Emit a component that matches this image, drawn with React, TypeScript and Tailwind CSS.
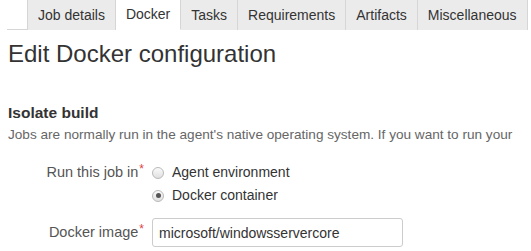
import { useState } from 'react'

const TABS = ['Job details', 'Docker', 'Tasks', 'Requirements', 'Artifacts', 'Miscellaneous']

function Radio({ checked, label, onSelect }: { checked: boolean; label: string; onSelect: () => void }) {
  return (
    <label className="flex h-[23px] cursor-pointer items-center gap-[8px]" onClick={onSelect}>
      <span className="flex h-[12px] w-[12px] items-center justify-center rounded-full border border-[#b9b9b9] bg-gradient-to-b from-[#fafafa] to-[#e0e0e0]">
        {checked && <span className="h-[5px] w-[5px] rounded-full bg-[#555]" />}
      </span>
      <span className="text-[14px] text-[#333]">{label}</span>
    </label>
  )
}

export default function App() {
  const [active, setActive] = useState('Docker')
  const [mode, setMode] = useState<'agent' | 'docker'>('docker')

  return (
    <div className="h-[251px] w-[531px] overflow-hidden bg-white font-['Liberation_Sans',Arial,sans-serif]">
      {/* Tab strip */}
      <div className="ml-[7px] mr-[4px] flex border-b border-[#d6d6d6] pl-[20px]">
        {TABS.map((tab, i) => {
          const isActive = tab === active
          return (
            <button
              key={tab}
              onClick={() => setActive(tab)}
              className={`-mb-px h-[30px] shrink-0 whitespace-nowrap border-r border-[#d6d6d6] px-[10px] text-[14px] text-[#333] ${
                i === 0 ? 'border-l' : ''
              } ${isActive ? 'border-b border-b-white bg-white' : 'bg-[#ebebeb]'}`}
            >
              {tab}
            </button>
          )
        })}
      </div>

      <div className="px-[8px]">
        <h1 className="mt-[10px] text-[24px] leading-[28px] text-[#333]">Edit Docker configuration</h1>

        <h2 className="mt-[35px] text-[15.5px] font-bold leading-[20px] text-[#333]">Isolate build</h2>
        <p className="mt-[3px] whitespace-nowrap text-[13.6px] leading-[18px] text-[#666]">
          Jobs are normally run in the agent's native operating system. If you want to run your
        </p>

        <div className="mt-[17px] grid grid-cols-[141px_1fr] gap-x-[3px]">
          <div className="flex h-[23px] items-center justify-end pr-[5px] text-[14.5px] text-[#555]">
            Run this job in<span className="-mt-[8px] ml-px text-[12px] text-[#d44]">*</span>
          </div>
          <Radio checked={mode === 'agent'} label="Agent environment" onSelect={() => setMode('agent')} />
          <div />
          <Radio checked={mode === 'docker'} label="Docker container" onSelect={() => setMode('docker')} />

          <div className="mt-[11px] flex h-[29px] items-center justify-end pr-[5px] text-[14.5px] text-[#555]">
            Docker image<span className="-mt-[8px] ml-px text-[12px] text-[#d44]">*</span>
          </div>
          <input
            defaultValue="microsoft/windowsservercore"
            className="mt-[11px] h-[29px] w-[251px] rounded-[3px] border border-[#ccc] px-[6px] text-[14px] text-[#333] outline-none"
          />
        </div>
      </div>
    </div>
  )
}
